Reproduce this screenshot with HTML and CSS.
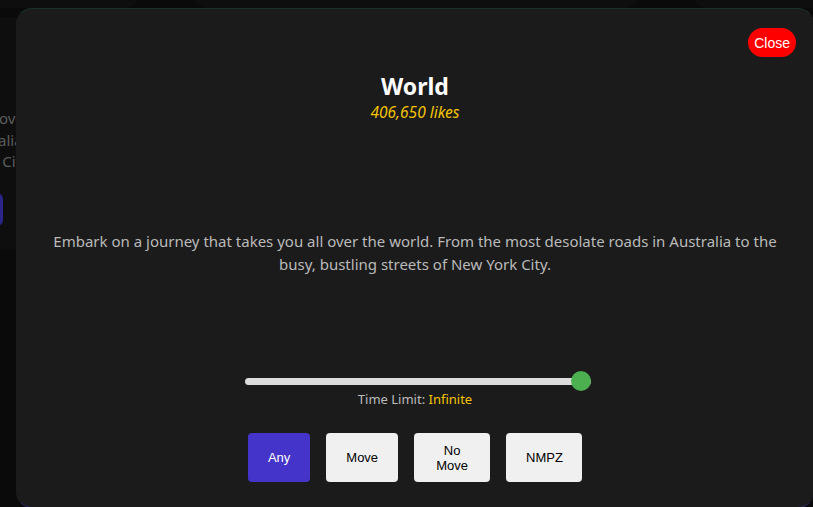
FILE: index.html
```html
<!DOCTYPE html>
<html lang="en">
<head>
    <meta charset="UTF-8">
    <title>World</title>
    <link rel="stylesheet" href="styles.css">
</head>
<body>
<!-- map list behind the dialog -->
<div class="page">
    <div class="top-row">
        <div class="map-card"></div>
        <div class="map-card"></div>
        <div class="map-card"></div>
    </div>
    <div class="map-card left-card">
        <p>journey that takes you all over</p>
        <p class="l2">desolate roads in Australia to</p>
        <p class="l3">streets of New York City.</p>
        <div class="play-btn"></div>
    </div>
</div>

<div class="modal">
    <button class="close">Close</button>
    <h1 class="title">World</h1>
    <div class="likes">406,650 likes</div>
    <p class="desc">Embark on a journey that takes you all over the world. From the most desolate roads in Australia to the busy, bustling streets of New York City.</p>
    <input class="slider" type="range" min="10" max="300" value="300">
    <div class="time">Time Limit: <span>Infinite</span></div>
    <div class="modes">
        <button class="mode active">Any</button>
        <button class="mode">Move</button>
        <button class="mode">No Move</button>
        <button class="mode">NMPZ</button>
    </div>
</div>
</body>
</html>
```
FILE: styles.css
```css
*{
    margin: 0;
    padding: 0;
    box-sizing: border-box;
}
body{
    background: #0a0a0a;
    font-family: "Noto Sans", "Open Sans", sans-serif;
    overflow: hidden;
    height: 507px;
}
.top-row{
    display: flex;
    gap: 52px;
    margin-left: -308px;
    margin-top: -200px;
}
.map-card{
    flex: none;
    width: 448px;
    height: 208px;
    border-radius: 16px;
    background: #0e0e0e;
}
.left-card{
    margin-left: -308px;
    margin-top: 10px;
    height: 232px;
    padding: 90px 110px 0 0;
    text-align: right;
    font-size: 15px;
    line-height: 21.5px;
    color: #5c5c5c;
}
.left-card .l2{
    margin-right: -11px;
}
.left-card .l3{
    margin-right: -2px;
}
.play-btn{
    width: 120px;
    height: 33px;
    margin: 20px 0 0 191px;
    border-radius: 6px;
    background: #2c2488;
}

/* dialog */
.modal{
    position: absolute;
    left: 16px;
    top: 8px;
    width: 798px;
    height: 500px;
    padding: 63px 30px 0;
    border-radius: 16px;
    border: 1px solid #1b1b1b;
    border-top-color: #1a332c;
    border-bottom-color: #2a2460;
    background: #1b1b1b;
    text-align: center;
    color: #bbb;
}
.close{
    position: absolute;
    top: 19px;
    right: 17px;
    height: 29px;
    padding: 0 6px;
    border: none;
    border-radius: 15px;
    background: #f00;
    color: #fff;
    font: 14px "Liberation Sans", Arial, sans-serif;
}
.title{
    font-size: 23px;
    line-height: 28px;
    font-weight: 700;
    color: #fff;
}
.likes{
    font-size: 15.5px;
    line-height: 24px;
    font-style: italic;
    color: #f5c400;
}
.desc{
    margin-top: 106px;
    font-size: 15px;
    line-height: 23px;
    color: #bababa;
}
.slider{
    -webkit-appearance: none;
    appearance: none;
    display: block;
    width: 346px;
    height: 20px;
    margin: 95px 0 0 calc(50% - 170px);
    background: transparent;
}
.slider::-webkit-slider-runnable-track{
    height: 7px;
    border-radius: 4px;
    background: #ddd;
}
.slider::-webkit-slider-thumb{
    -webkit-appearance: none;
    width: 20px;
    height: 20px;
    margin-top: -6.5px;
    border-radius: 50%;
    background: #4caf50;
}
.time{
    font-size: 13px;
    line-height: 16px;
}
.time span{
    color: #f5c400;
}
.modes{
    display: flex;
    justify-content: center;
    gap: 16px;
    margin-top: 26px;
}
.mode{
    height: 49px;
    max-width: 76px;
    padding: 0 20px;
    border: none;
    border-radius: 4px;
    background: #f0f0f0;
    color: #000;
    font: 13px/15px "Liberation Sans", Arial, sans-serif;
}
.mode.active{
    background: #4434c9;
    color: #fff;
}
```
